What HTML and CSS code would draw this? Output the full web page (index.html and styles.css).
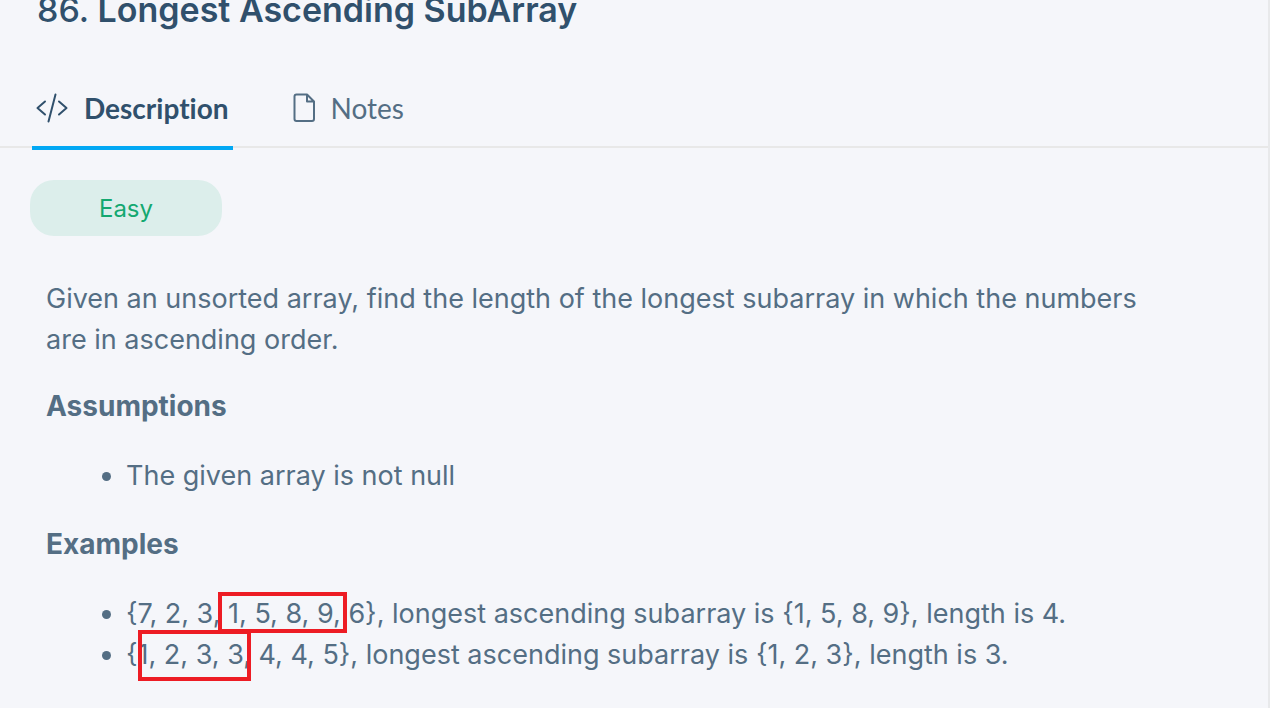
FILE: index.html
```html
<!DOCTYPE html>
<html lang="en">
<head>
<meta charset="utf-8">
<meta name="viewport" content="width=device-width, initial-scale=1">
<title>Longest Ascending SubArray</title>
<link rel="stylesheet" href="styles.css">
</head>
<body>
<main class="problem">
  <h1 class="title"><span class="title-number">86.</span> Longest Ascending SubArray</h1>
  <div class="tabs" role="tablist">
    <button class="tab tab-active" type="button" role="tab" aria-selected="true">
      <svg class="icon-code" viewBox="0 0 32 30" aria-hidden="true"><path d="M9 8.500 1.500 15l7.500 6.500M23 8.500l7.500 6.500-7.500 6.500M19.500 1.500l-7 27"/></svg>
      <span>Description</span>
    </button>
    <button class="tab" type="button" role="tab" aria-selected="false">
      <svg class="icon-file" viewBox="0 0 22 30" aria-hidden="true"><path d="M3.500 1.500h10.500l7 7V26q0 2-2 2H3.500q-2 0-2-2V3.500q0-2 2-2zM14 1.500V8.500H21"/></svg>
      <span>Notes</span>
    </button>
  </div>
  <section class="content" role="tabpanel">
    <span class="badge">Easy</span>
    <div class="statement">
      <p>Given an unsorted array, find the length of the longest subarray in which the numbers are in ascending order.</p>
      <h2>Assumptions</h2>
      <ul>
        <li>The given array is not null</li>
      </ul>
      <h2>Examples</h2>
      <ul>
        <li>{7, 2, 3, 1, 5, 8, 9, 6}, longest ascending subarray is {1, 5, 8, 9}, length is 4.</li>
        <li>{1, 2, 3, 3, 4, 4, 5}, longest ascending subarray is {1, 2, 3}, length is 3.</li>
      </ul>
    </div>
  </section>
  <div class="mark mark-first"></div>
  <div class="mark mark-second"></div>
</main>
</body>
</html>
```
FILE: styles.css
```css
* { box-sizing: border-box; }
body {
  margin: 0;
  background: #f5f6fa;
  color: #546e84;
  font-family: Inter, "Liberation Sans", sans-serif;
  font-size: 27px;
  line-height: 41px;
  overflow: hidden;
}
.problem {
  display: flow-root;
  position: relative;
  min-height: 100vh;
  border-right: 2px solid #e8e9eb;
}
.title {
  margin: -12px 0 0;
  padding-left: 37px;
  font-size: 34px;
  line-height: 44px;
  font-weight: 600;
  color: #30506c;
}
.title-number { font-weight: 500; }
.tabs {
  display: flex;
  gap: 56px;
  height: 116px;
  padding: 38px 32px 0;
  border-bottom: 2px solid #e8e8e8;
}
.tab {
  display: flex;
  align-items: center;
  gap: 16px;
  height: 80px;
  padding: 0 4px;
  border: 0;
  border-bottom: 4px solid transparent;
  background: none;
  color: #546e84;
  font-family: Lato, sans-serif;
  font-size: 28px;
  line-height: 36px;
  font-variant-ligatures: none;
  cursor: pointer;
}
.tab-active {
  border-bottom-color: #02a8f4;
  color: #30506c;
  font-weight: 700;
}
.tab svg {
  height: 30px;
  fill: none;
  stroke: currentColor;
  stroke-width: 2;
  stroke-linecap: round;
  stroke-linejoin: round;
}
.icon-code { width: 32px; }
.icon-file { width: 22px; }
.content { padding: 32px 30px 0; }
.badge {
  display: block;
  width: 192px;
  height: 56px;
  padding-top: 1px;
  border-radius: 24px;
  background: #dceeeb;
  color: #14a870;
  font-size: 24px;
  line-height: 56px;
  text-align: center;
}
.statement {
  max-width: 1160px;
  padding: 42px 16px 0;
}
.statement p {
  margin: 0 0 26px;
}
.statement h2 {
  margin: 0 0 28px;
  font-size: 28px;
  line-height: 41px;
  font-weight: 700;
}
.statement ul {
  margin: 0 0 28px;
  padding-left: 80px;
}
.mark {
  position: absolute;
  border: 4px solid #ed1c24;
}
.mark-first {
  left: 218px;
  top: 592px;
  width: 129px;
  height: 41px;
}
.mark-second {
  left: 138px;
  top: 630px;
  width: 113px;
  height: 51px;
}
```
